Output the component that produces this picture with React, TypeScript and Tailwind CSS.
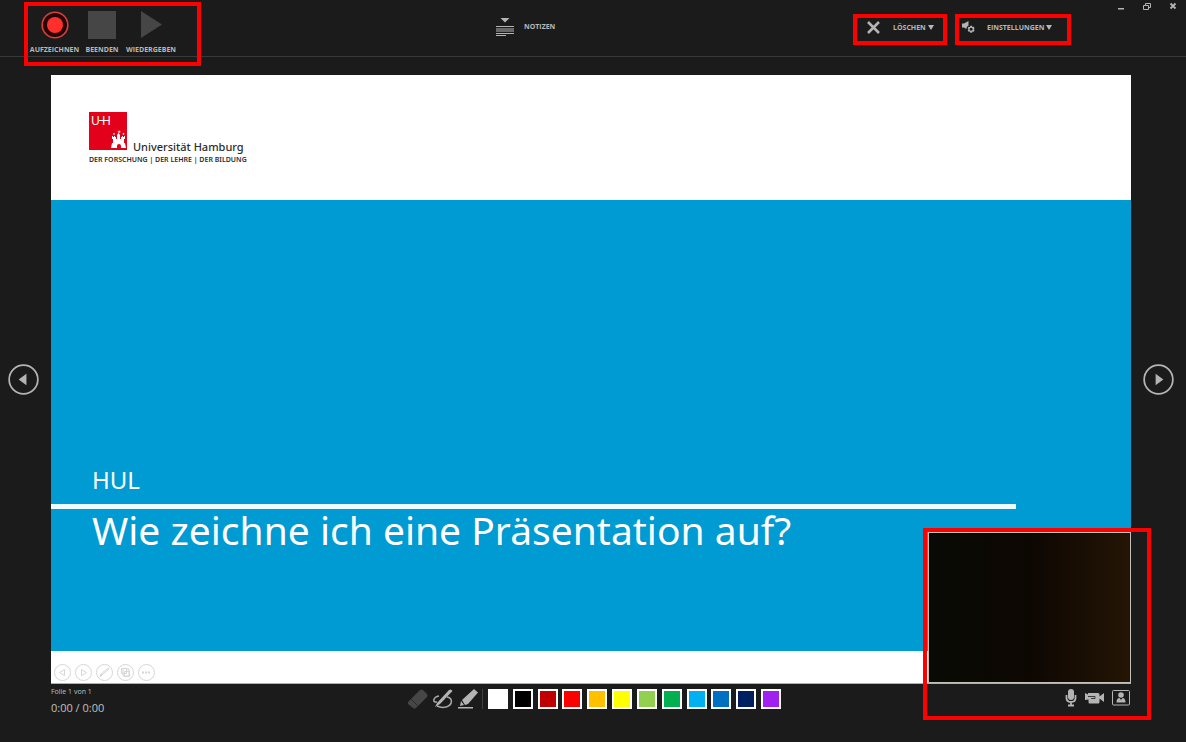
import React from "react";

const SWATCHES = [
  { name: "Weiß", color: "bg-white" },
  { name: "Schwarz", color: "bg-black" },
  { name: "Dunkelrot", color: "bg-[#c00000]" },
  { name: "Rot", color: "bg-[#ff0000]" },
  { name: "Orange", color: "bg-[#ffc000]" },
  { name: "Gelb", color: "bg-[#ffff00]" },
  { name: "Hellgrün", color: "bg-[#92d050]" },
  { name: "Grün", color: "bg-[#00b050]" },
  { name: "Hellblau", color: "bg-[#00b0f0]" },
  { name: "Blau", color: "bg-[#0070c0]" },
  { name: "Dunkelblau", color: "bg-[#002060]" },
  { name: "Lila", color: "bg-[#a020f0]" },
];

function TransportButton({ label, width, children }: { label: string; width: string; children: React.ReactNode }) {
  return (
    <button className={`${width} flex flex-col items-center gap-[5px]`}>
      {children}
      <span className="whitespace-nowrap text-[7px] leading-3 font-bold">{label}</span>
    </button>
  );
}

function Caret() {
  return (
    <svg width="6" height="5" viewBox="0 0 6 5" fill="currentColor">
      <path d="M0 0h6L3 5z" />
    </svg>
  );
}

function Toolbar() {
  return (
    <header className="flex h-[57px] shrink-0 items-start border-b border-[#393939]">
      <div className="flex-1">
        <div className="relative ml-6 flex w-[177px] gap-[7px] pl-[6px] pt-[11px]">
          <TransportButton label="AUFZEICHNEN" width="w-[49px]">
            <svg width="28" height="28" viewBox="0 0 28 28">
              <circle cx="14" cy="14" r="12.8" fill="#250505" stroke="#d9403c" strokeWidth="1.6" />
              <circle cx="14" cy="14" r="8" fill="#ff302c" />
            </svg>
          </TransportButton>
          <TransportButton label="BEENDEN" width="w-[32px]">
            <svg width="28" height="28" viewBox="0 0 28 28">
              <rect width="28" height="28" fill="#464646" />
            </svg>
          </TransportButton>
          <TransportButton label="WIEDERGEBEN" width="w-[52px]">
            <svg width="28" height="28" viewBox="0 0 28 28">
              <path d="M4 0v27l21-13.5z" fill="#464646" />
            </svg>
          </TransportButton>
          <div className="pointer-events-none absolute inset-x-0 top-[2px] h-[64px] border-4 border-[#ff0000]" />
        </div>
      </div>

      <div className="w-[357px] pt-[18px]">
        <button className="flex items-center gap-[10px]">
          <svg width="18" height="18" viewBox="0 0 18 18" fill="#b4b4b4">
            <path d="M4.500 0h9L9 4.500z" />
            <path d="M0 8h18v1H0zM0 17h10v1H0zM0 15h18v1H0z" />
            <path d="M0 10h18v4H0z" fill="#686868" />
          </svg>
          <span className="text-[7px] leading-3 font-bold">NOTIZEN</span>
        </button>
      </div>

      <div className="flex w-[333px] items-start">
        <div className="flex flex-1 gap-2 pt-[14px]">
          <button className="flex h-[31px] w-[94px] items-center border-4 border-[#ff0000] pb-[4px] pl-[10px]">
            <svg width="13" height="13" viewBox="0 0 13 13" fill="none" stroke="#b4b4b4" strokeWidth="2.6">
              <path d="M1 1l11 11M12 1L1 12" />
            </svg>
            <span className="ml-[13px] mr-[2px] text-[7px] leading-3 font-bold">LÖSCHEN</span>
            <Caret />
          </button>
          <button className="flex h-[31px] w-[116px] items-center border-4 border-[#ff0000] pb-[4px] pl-[3px]">
            <svg width="13" height="13" viewBox="0 0 13 13" fill="#b4b4b4">
              <path d="M0 2.500h2L6.500 0v4.500Q4.300 5.500 4.300 8L2 6.500H0z" />
              <path
                fillRule="evenodd"
                d="M8.300 4.800h1.700l.4 1.200 1.300-.3.900 1.500-.9 1 .9 1-.9 1.500-1.300-.3-.4 1.300H8.300l-.4-1.300-1.300.3-.9-1.500.9-1-.9-1 .9-1.500 1.300.3zM9.100 6.700a1.500 1.500 0 1 0 .01 0z"
              />
            </svg>
            <span className="ml-[12px] mr-[2px] text-[7px] leading-3 font-bold">EINSTELLUNGEN</span>
            <Caret />
          </button>
        </div>
        <div className="flex gap-[18px] pr-[9px] pt-[2px]">
          <button aria-label="Minimieren">
            <svg width="8" height="8" viewBox="0 0 8 8">
              <path d="M1 6h6v1.500H1z" fill="#b4b4b4" />
            </svg>
          </button>
          <button aria-label="Verkleinern">
            <svg width="8" height="8" viewBox="0 0 8 8" fill="none" stroke="#b4b4b4">
              <path d="M2.500 3V1.500h5v4H6M.5 3.500h5v4h-5z" />
            </svg>
          </button>
          <button aria-label="Schließen">
            <svg width="8" height="8" viewBox="0 0 8 8" fill="none" stroke="#b4b4b4" strokeWidth="1.800">
              <path d="M1.500 1.500l5 5M6.500 1.500l-5 5" />
            </svg>
          </button>
        </div>
      </div>
    </header>
  );
}

function UniLogo() {
  return (
    <div className="w-fit text-[#2b2b2b]">
      <div className="flex items-end gap-[6px]">
        <svg width="38" height="38" viewBox="0 0 38 38">
          <rect width="38" height="38" fill="#e2001a" />
          <text x="2" y="13" fontSize="12" fill="#fff" fontFamily="Noto Sans, sans-serif">U</text>
          <text x="13" y="13" fontSize="12" fill="#fff" fontFamily="Noto Sans, sans-serif">H</text>
          <path d="M10 8h5v1h-5z" fill="#fff" />
          {/* Hamburg castle */}
          <path
            fill="#fff"
            d="M22 36l1-5h1v-4h-1v-3h1v1h1v-1h1v1h1v2h1v-4l1.500-2 1.500 2v4h1v-2h1v-1h1v1h1v-1h1v3h-1v4h1l1 5h-5v-2a2 2 0 0 0-4 0v2zM28.700 19.500h1v-1h.8v1h1v.8h-1v.9h-.8v-.9h-1zM24 22l1-1.300 1 1.300-1 1zM33.500 22l1-1.300 1 1.300-1 1z"
          />
        </svg>
        <span className="whitespace-nowrap font-['Noto_Sans'] text-[11px] leading-[6px] font-medium">
          Universität Hamburg
        </span>
      </div>
      <p className="mt-[4px] whitespace-nowrap font-['Noto_Sans'] text-[7px] leading-3 font-semibold">
        DER FORSCHUNG | DER LEHRE | DER BILDUNG
      </p>
    </div>
  );
}

function SlideControls() {
  return (
    <div className="flex h-8 items-center gap-[4px] pl-[3px] pt-[11px]">
      {["Zurück", "Weiter", "Stift", "Alle Folien", "Mehr"].map((name, i) => (
        <button key={name} aria-label={name}>
          <svg width="17" height="17" viewBox="0 0 17 17" fill="none" stroke="#d6d6d6">
            <circle cx="8.500" cy="8.500" r="8" />
            {i === 0 && <path d="M10.500 5.500v6l-5-3z" />}
            {i === 1 && <path d="M6.500 5.500v6l5-3z" />}
            {i === 2 && <path d="M4 13l1-3 7-6 1 1-7 6zM5 10l1 1" />}
            {i === 3 && <path d="M4.500 4.500h5v5h-5zM7.500 7.500h5v5h-5zM6 4v8h6M9 5h3v7" />}
            {i === 4 && <path d="M4 8.500h9" strokeWidth="2" strokeDasharray="2 1" />}
          </svg>
        </button>
      ))}
    </div>
  );
}

function Webcam() {
  return (
    <div className="absolute bottom-0 right-0 h-[151px] w-[203px] border border-[#c0c0b8] bg-linear-to-r from-[#080a05] via-[#0d0702] to-[#251505]">
      <div className="pointer-events-none absolute -bottom-[38px] -left-[6px] -right-[21px] -top-[5px] border-4 border-[#ff0000]" />
    </div>
  );
}

function Slide() {
  return (
    <section className="relative flex min-w-0 flex-1 flex-col border-b border-[#b0b0b0] bg-white">
      <div className="h-[125px] pl-[38px] pt-[37px]">
        <UniLogo />
      </div>
      <div className="flex flex-1 flex-col justify-end bg-[#009bd2] pb-[100px] font-['Noto_Sans'] text-white">
        <p className="pl-[41px] text-[24px] leading-8">HUL</p>
        <div className="mt-[8px] h-[5px] w-[965px] max-w-full bg-[#eefcff]" />
        <h1 className="pl-[41px] text-[39px] leading-[42px]">Wie zeichne ich eine Präsentation auf?</h1>
      </div>
      <SlideControls />
      <Webcam />
    </section>
  );
}

function NavButton({ label, path }: { label: string; path: string }) {
  return (
    <button aria-label={label}>
      <svg width="31" height="31" viewBox="0 0 32 32">
        <circle cx="16" cy="16" r="14.800" fill="none" stroke="#b4b4b4" strokeWidth="1.800" />
        <path d={path} fill="#b4b4b4" />
      </svg>
    </button>
  );
}

function BottomBar() {
  return (
    <footer className="flex h-[58px] shrink-0 items-start pl-[51px] pr-[56px]">
      <div className="flex-1 pr-[8px] text-[#c0c0c0]">
        <p className="pt-[2px] text-[7px] leading-3">Folie 1 von 1</p>
        <p className="pt-[2px] text-[11px] leading-4">0:00 / 0:00</p>
      </div>
      <div className="flex items-center pt-[5px]">
        <div className="flex gap-[5px]">
          <button aria-label="Radierer">
            <svg width="20" height="20" viewBox="0 0 20 20">
              <path d="M0 13L12 1q1.500-1 3 0l4 4q1 1.500 0 3L8 19q-1.500 1-3 0l-5-4q-.6-1 0-2z" fill="#464646" />
              <path d="M3 10l7 7" stroke="#2c2c2c" />
            </svg>
          </button>
          <button aria-label="Stift">
            <svg width="20" height="20" viewBox="0 0 20 20">
              <path d="M6 7C0 8-1 14 4 13M14 8c6 1 6 8-1 10-4 1-7 0-9-1" fill="none" stroke="#a8a8a8" strokeWidth="1.500" />
              <path d="M2 18l2-4L16 1q2-1.500 3.500 1L7 15z" fill="#b4b4b4" />
            </svg>
          </button>
          <button aria-label="Textmarker">
            <svg width="20" height="20" viewBox="0 0 20 20" fill="#b4b4b4">
              <path d="M4 11L16 0l4 3.500L10 15l-3 1z" />
              <path d="M3 12l3 4-4 1zM0 18h15v1.600H0z" />
            </svg>
          </button>
        </div>
        <div className="ml-[4px] mr-[5px] h-5 w-px bg-[#404040]" />
        <div className="flex w-[293px] justify-between">
          {SWATCHES.map((swatch) => (
            <button
              key={swatch.name}
              aria-label={swatch.name}
              className={`size-5 border-2 border-white ${swatch.color}`}
            />
          ))}
        </div>
      </div>
      <div className="flex flex-1 items-center justify-end gap-[8px] pt-[5px]">
        <button aria-label="Mikrofon">
          <svg width="12" height="18" viewBox="0 0 12 18">
            <rect x="3" y="0" width="6" height="11" rx="3" fill="#b4b4b4" />
            <path d="M1.500 6v3q0 4 4.500 4t4.500-4V6M6 13v4M3 16.500h6" fill="none" stroke="#b4b4b4" strokeWidth="1.800" />
          </svg>
        </button>
        <button aria-label="Kamera">
          <svg width="19" height="12" viewBox="0 0 19 12">
            <path d="M0 1l3 1.500V1h10q1.500 0 1.500 1.500v2L19 1v9l-4.500-3.500V10q0 1.500-1.500 1.500H4.500q-1 0-1-1.500V7.500L0 8z" fill="#b4b4b4" />
            <path d="M3 4.500h7v2H6" fill="none" stroke="#1b1b1b" strokeWidth=".8" />
          </svg>
        </button>
        <button aria-label="Kameravorschau">
          <svg width="18" height="16" viewBox="0 0 18 16">
            <rect x=".5" y=".5" width="17" height="14.500" rx="1" fill="none" stroke="#b4b4b4" />
            <circle cx="9" cy="5" r="2.800" fill="#b4b4b4" />
            <path d="M4.500 12.500q0-4.500 3-4.500L9 10l1.500-2q3 0 3 4.500z" fill="#b4b4b4" />
          </svg>
        </button>
      </div>
    </footer>
  );
}

export default function App() {
  return (
    <div className="flex min-h-screen flex-col bg-[#1b1b1b] font-['Open_Sans',sans-serif] text-[#b8b8b8]">
      <Toolbar />
      <main className="flex flex-1 pt-[18px]">
        <div className="flex w-[51px] items-center pl-[8px]">
          <NavButton label="Vorherige Folie" path="M19 10v12l-8-6z" />
        </div>
        <Slide />
        <div className="flex w-[55px] items-center pl-[12px]">
          <NavButton label="Nächste Folie" path="M13 10v12l8-6z" />
        </div>
      </main>
      <BottomBar />
    </div>
  );
}
